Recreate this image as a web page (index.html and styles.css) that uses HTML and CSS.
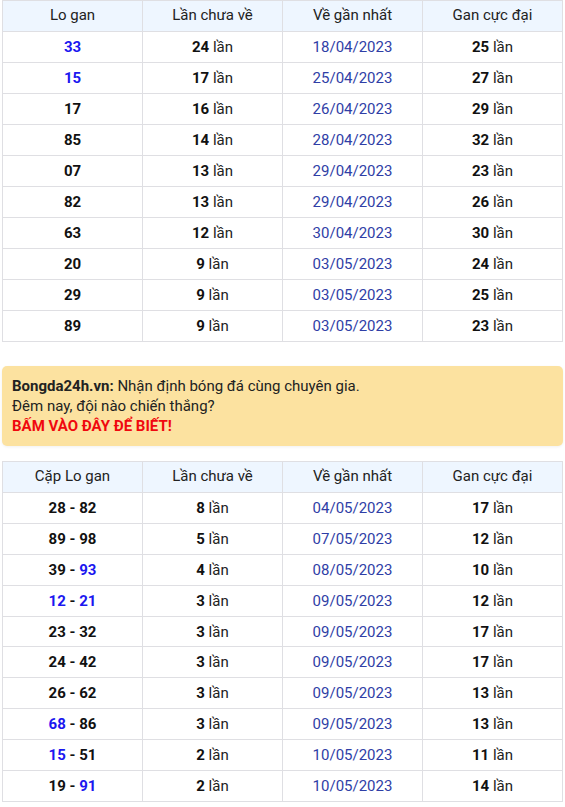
FILE: index.html
```html
<!DOCTYPE html>
<html lang="vi">
<head>
<meta charset="utf-8">
<link rel="stylesheet" href="styles.css">
</head>
<body>
<div class="page">
<table class="gan">
<thead>
<tr><th>Lo gan</th><th>Lần chưa về</th><th>Về gần nhất</th><th>Gan cực đại</th></tr>
</thead>
<tbody>
<tr><td><b class="hl">33</b></td><td><b>24</b> lần</td><td class="date">18/04/2023</td><td><b>25</b> lần</td></tr>
<tr><td><b class="hl">15</b></td><td><b>17</b> lần</td><td class="date">25/04/2023</td><td><b>27</b> lần</td></tr>
<tr><td><b>17</b></td><td><b>16</b> lần</td><td class="date">26/04/2023</td><td><b>29</b> lần</td></tr>
<tr><td><b>85</b></td><td><b>14</b> lần</td><td class="date">28/04/2023</td><td><b>32</b> lần</td></tr>
<tr><td><b>07</b></td><td><b>13</b> lần</td><td class="date">29/04/2023</td><td><b>23</b> lần</td></tr>
<tr><td><b>82</b></td><td><b>13</b> lần</td><td class="date">29/04/2023</td><td><b>26</b> lần</td></tr>
<tr><td><b>63</b></td><td><b>12</b> lần</td><td class="date">30/04/2023</td><td><b>30</b> lần</td></tr>
<tr><td><b>20</b></td><td><b>9</b> lần</td><td class="date">03/05/2023</td><td><b>24</b> lần</td></tr>
<tr><td><b>29</b></td><td><b>9</b> lần</td><td class="date">03/05/2023</td><td><b>25</b> lần</td></tr>
<tr><td><b>89</b></td><td><b>9</b> lần</td><td class="date">03/05/2023</td><td><b>23</b> lần</td></tr>
</tbody>
</table>

<div class="promo">
<div><b>Bongda24h.vn:</b> Nhận định bóng đá cùng chuyên gia.</div>
<div>Đêm nay, đội nào chiến thắng?</div>
<div class="cta">BẤM VÀO ĐÂY ĐỂ BIẾT!</div>
</div>

<table class="gan gan2">
<thead>
<tr><th>Cặp Lo gan</th><th>Lần chưa về</th><th>Về gần nhất</th><th>Gan cực đại</th></tr>
</thead>
<tbody>
<tr><td><b>28 - 82</b></td><td><b>8</b> lần</td><td class="date">04/05/2023</td><td><b>17</b> lần</td></tr>
<tr><td><b>89 - 98</b></td><td><b>5</b> lần</td><td class="date">07/05/2023</td><td><b>12</b> lần</td></tr>
<tr><td><b>39 - <span class="hl">93</span></b></td><td><b>4</b> lần</td><td class="date">08/05/2023</td><td><b>10</b> lần</td></tr>
<tr><td><b><span class="hl">12</span> - <span class="hl">21</span></b></td><td><b>3</b> lần</td><td class="date">09/05/2023</td><td><b>12</b> lần</td></tr>
<tr><td><b>23 - 32</b></td><td><b>3</b> lần</td><td class="date">09/05/2023</td><td><b>17</b> lần</td></tr>
<tr><td><b>24 - 42</b></td><td><b>3</b> lần</td><td class="date">09/05/2023</td><td><b>17</b> lần</td></tr>
<tr><td><b>26 - 62</b></td><td><b>3</b> lần</td><td class="date">09/05/2023</td><td><b>13</b> lần</td></tr>
<tr><td><b><span class="hl">68</span> - 86</b></td><td><b>3</b> lần</td><td class="date">09/05/2023</td><td><b>13</b> lần</td></tr>
<tr><td><b><span class="hl">15</span> - 51</b></td><td><b>2</b> lần</td><td class="date">10/05/2023</td><td><b>11</b> lần</td></tr>
<tr><td><b>19 - <span class="hl">91</span></b></td><td><b>2</b> lần</td><td class="date">10/05/2023</td><td><b>14</b> lần</td></tr>
</tbody>
</table>
</div>
</body>
</html>
```
FILE: styles.css
```css
html, body {
  margin: 0;
  padding: 0;
  background: #fff;
}
body {
  font-family: Roboto, "Liberation Sans", sans-serif;
  font-size: 15px;
  color: #222;
}
.page {
  padding: 0 2px;
}
.gan {
  width: 561px;
  border-collapse: collapse;
  table-layout: fixed;
}
.gan th, .gan td {
  border: 1px solid #dfdfe3;
  height: 30px;
  padding: 0;
  text-align: center;
  vertical-align: middle;
  line-height: 18px;
}
.gan th {
  background: #eef6ff;
  font-weight: 400;
  color: #222;
  padding-bottom: 2px;
  height: 28px;
}
.gan2 td {
  height: 29.9px;
}
.gan td b {
  color: #111;
  font-weight: 700;
}
.gan td b.hl, .gan td .hl {
  color: #1b17f0;
}
.gan td.date {
  color: #2f3ea6;
}
.promo {
  margin: 24px 0 15px 0;
  width: 541px;
  padding: 10px 10px 10px 10px;
  background: #fce2a0;
  border-radius: 5px;
  line-height: 20px;
  color: #222;
  box-shadow: 0 1px 3px rgba(0,0,0,0.06);
}
.promo b {
  font-weight: 700;
  color: #222;
}
.promo .cta {
  color: #f0080e;
  font-weight: 700;
}
```
